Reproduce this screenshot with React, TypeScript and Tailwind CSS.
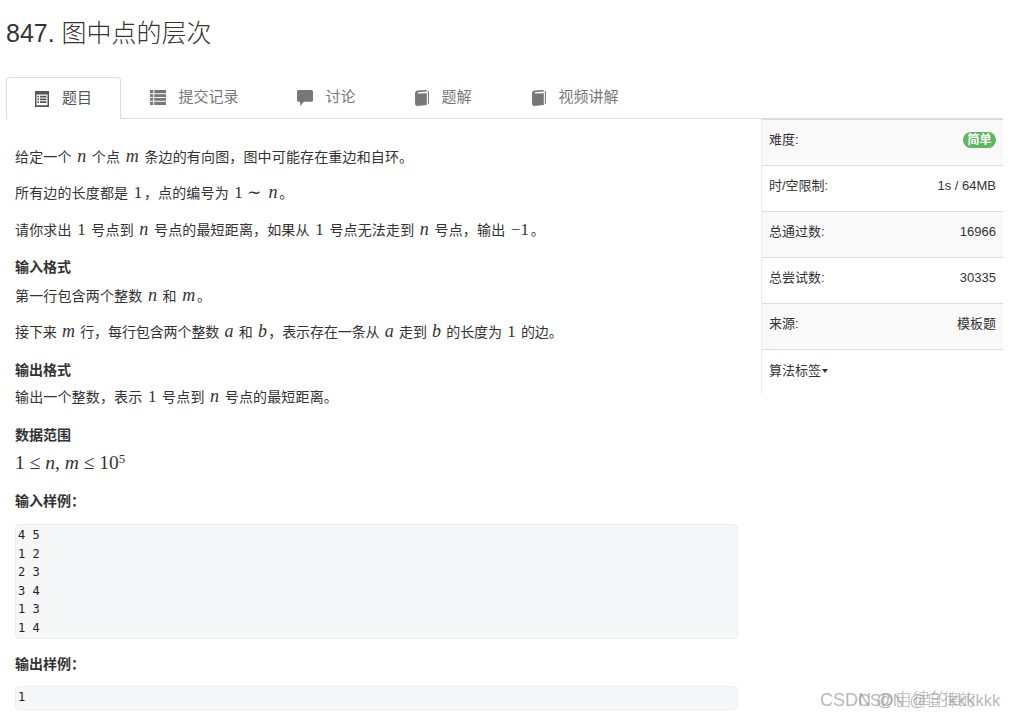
import type { ReactNode } from 'react'

function ListAltIcon() {
  return (
    <svg width="14" height="16" viewBox="0 0 14 14" preserveAspectRatio="none" className="text-[#555]">
      <path fill="currentColor" fillRule="evenodd" d="M0 0h14v14H0zM1.500 3v9.500h11V3zM2.500 4.200h1.600v1.500H2.500zM5 4.200h6.500v1.500H5zM2.500 6.600h1.600v1.500H2.500zM5 6.600h6.500v1.500H5zM2.500 9h1.600v1.500H2.500zM5 9h6.500v1.500H5z" />
    </svg>
  )
}

function ThListIcon() {
  return (
    <svg width="16" height="15" viewBox="0 0 15 14" className="text-[#777]">
      <path fill="currentColor" d="M0 0h3v3H0zM4 0h11v3H4zM0 4h3v2.500H0zM4 4h11v2.500H4zM0 7.500h3V10H0zM4 7.500h11V10H4zM0 11h3v3H0zM4 11h11v3H4z" />
    </svg>
  )
}

function CommentIcon() {
  return (
    <svg width="16" height="16" viewBox="0 0 15 15" className="text-[#777]">
      <path fill="currentColor" d="M1.500 0h12A1.500 1.500 0 0 1 15 1.500v8a1.500 1.500 0 0 1-1.500 1.500H6.500L3 15v-4H1.500A1.500 1.500 0 0 1 0 9.500v-8A1.500 1.500 0 0 1 1.500 0z" />
    </svg>
  )
}

function BookIcon() {
  return (
    <svg width="14" height="16" viewBox="0 0 13 15" className="text-[#777]">
      <path fill="currentColor" d="M2.500 0.500 11 0v1.500L3 2.200C2 2.300 2 3.300 3 3.300L11 3v11l-9 1C1 15 0 14.200 0 13V3C0 1.500 1 0.700 2.500 0.500z" />
      <path fill="currentColor" d="M12 1h1v12l-1 .5z" />
    </svg>
  )
}

function M({ children }: { children: ReactNode }) {
  return <span className="font-['Liberation_Serif'] italic text-[18px] leading-none mx-[1.500px]">{children}</span>
}

function N({ children }: { children: ReactNode }) {
  return <span className="font-['Liberation_Serif'] text-[17px] leading-none mx-[1.500px]">{children}</span>
}

function Heading({ children }: { children: ReactNode }) {
  return <div className="font-bold h-5 leading-5">{children}</div>
}

const tabs = [
  { label: '提交记录', icon: <ThListIcon />, width: 'w-[147px]' },
  { label: '讨论', icon: <CommentIcon />, width: 'w-[117px]' },
  { label: '题解', icon: <BookIcon />, width: 'w-[117px]' },
  { label: '视频讲解', icon: <BookIcon />, width: 'w-[147px]' },
]

const info = [
  { name: '难度:', value: <span className="bg-[#5cb85c] text-white text-[12px] font-bold leading-4 rounded-full px-[4.500px] h-4 flex items-center">简单</span> },
  { name: '时/空限制:', value: '1s / 64MB' },
  { name: '总通过数:', value: '16966' },
  { name: '总尝试数:', value: '30335' },
  { name: '来源:', value: '模板题' },
]

const sample = ['4 5', '1 2', '2 3', '3 4', '1 3', '1 4']

export default function App() {
  return (
    <div className="w-[1015px] h-[719px] overflow-hidden relative bg-white text-[#333] text-[14px] [text-spacing-trim:space-all] font-['Liberation_Sans','Noto_Sans_CJK_SC',sans-serif]">
      <h1 className="text-[25px] leading-[26px] pl-[6px] pt-[20px] h-[77px] font-light">847. 图中点的层次</h1>

      {/* tabs */}
      <div className="flex ml-[6px] mr-[12px] h-[42px] border-b border-[#ddd]">
        <div className="w-[115px] h-[42px] bg-white border border-b-0 border-[#ddd] rounded-t flex items-center gap-[13px] pl-[28px] text-[#555] text-[15px]">
          <ListAltIcon />
          题目
        </div>
        {tabs.map((t) => (
          <div key={t.label} className={`${t.width} h-[41px] flex items-center justify-center gap-[12px] text-[#777] text-[15px]`}>
            {t.icon}
            {t.label}
          </div>
        ))}
      </div>

      <div className="flex">
        <div className="w-[755px] ml-[6px] pl-[9px] pr-[23px]">
          <div className="pt-[28px]">
            <p className="h-5 leading-5 tracking-[0.15px]">给定一个 <M>n</M> 个点 <M>m</M> 条边的有向图，图中可能存在重边和自环。</p>
            <p className="h-5 leading-5 mt-[16px] tracking-[0.15px]">所有边的长度都是 <N>1</N>，点的编号为 <N>1 ∼</N> <M>n</M>。</p>
            <p className="h-5 leading-5 mt-[17px] tracking-[0.15px]">请你求出 <N>1</N> 号点到 <M>n</M> 号点的最短距离，如果从 <N>1</N> 号点无法走到 <M>n</M> 号点，输出 <N>−1</N>。</p>
            <div className="mt-[17px]"><Heading>输入格式</Heading></div>
            <p className="h-5 leading-5 mt-[9px] tracking-[0.15px]">第一行包含两个整数 <M>n</M> 和 <M>m</M>。</p>
            <p className="h-5 leading-5 mt-[16px] tracking-[-0.1px]">接下来 <M>m</M> 行，每行包含两个整数 <M>a</M> 和 <M>b</M>，表示存在一条从 <M>a</M> 走到 <M>b</M> 的长度为 <N>1</N> 的边。</p>
            <div className="mt-[18px]"><Heading>输出格式</Heading></div>
            <p className="h-5 leading-5 mt-[7px] tracking-[0.15px]">输出一个整数，表示 <N>1</N> 号点到 <M>n</M> 号点的最短距离。</p>
            <div className="mt-[18px]"><Heading>数据范围</Heading></div>
            <p className="h-5 leading-5 mt-[8px] font-['Liberation_Serif'] text-[19.500px] whitespace-nowrap">1 ≤ <i>n</i>, <i>m</i> ≤ 10<sup className="text-[13px]">5</sup></p>
            <div className="mt-[18px]"><Heading>输入样例：</Heading></div>
          </div>
          <pre className="mt-[13px] h-[115px] bg-[#f6f7f9] border border-[#eceef1] rounded pl-[2px] pt-[1px] text-[12px] leading-[18.6px] font-['DejaVu_Sans_Mono',monospace] text-[#222]">
            {sample.join('\n')}
          </pre>
          <div className="mt-[15px]"><Heading>输出样例：</Heading></div>
          <pre className="mt-[12px] h-[24px] bg-[#f6f7f9] border border-[#eceef1] rounded pl-[2px] pt-[1px] text-[12px] leading-[18.6px] font-['DejaVu_Sans_Mono',monospace] text-[#222]">
            1
          </pre>
        </div>

        {/* info panel */}
        <div className="w-[242px] h-[275px] border-l border-[#eee] text-[13px]">
          <div className="border-t-2 border-[#ddd] -mt-[1px]">
            {info.map((row, i) => (
              <div
                key={row.name}
                className={`h-[46px] flex items-center justify-between pl-[7px] pr-[7px] pb-[5px] border-b border-[#ddd] ${i % 2 === 0 ? 'bg-[#f9f9f9]' : 'bg-white'}`}
              >
                <span>{row.name}</span>
                {row.value}
              </div>
            ))}
          </div>
          <div className="pl-[7px] pt-[11px] flex items-center">
            算法标签
            <span className="ml-[1px] mt-[1px] w-0 h-0 border-x-[3.500px] border-x-transparent border-t-[4px] border-t-[#333]" />
          </div>
        </div>
      </div>

      {/* doubled watermark */}
      <div className="absolute left-[820px] top-[690px] text-[18px] font-light leading-5 text-[#999]/70 whitespace-nowrap">CSDN @自律的kkk</div>
      <div className="absolute left-[858px] top-[690px] text-[16.500px] font-light leading-5 text-[#999]/70 whitespace-nowrap">CSDN @自律的kkk</div>
    </div>
  )
}
